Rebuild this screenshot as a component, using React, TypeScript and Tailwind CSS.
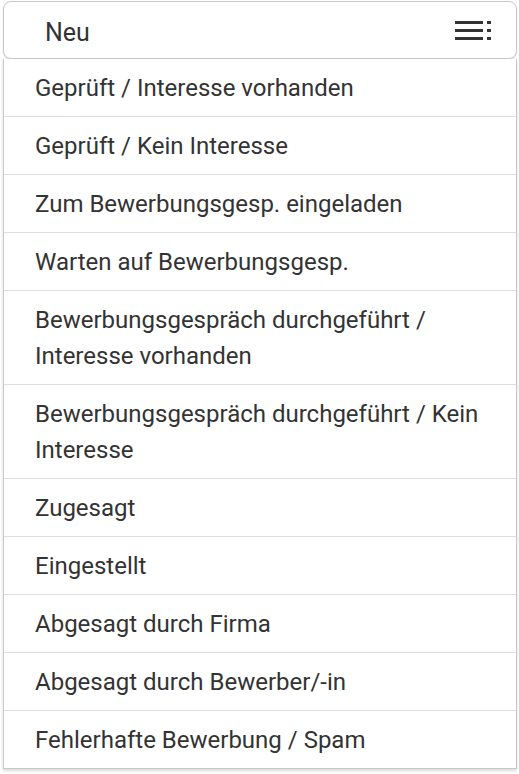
const ITEMS = [
  "Geprüft / Interesse vorhanden",
  "Geprüft / Kein Interesse",
  "Zum Bewerbungsgesp. eingeladen",
  "Warten auf Bewerbungsgesp.",
  "Bewerbungsgespräch durchgeführt / Interesse vorhanden",
  "Bewerbungsgespräch durchgeführt / Kein Interesse",
  "Zugesagt",
  "Eingestellt",
  "Abgesagt durch Firma",
  "Abgesagt durch Bewerber/-in",
  "Fehlerhafte Bewerbung / Spam",
];

function ListIcon() {
  return (
    <svg width="36" height="20" viewBox="0 0 36 20" className="text-[#333]">
      <rect x="0" y="1" width="28" height="3" fill="currentColor" />
      <rect x="0" y="9" width="28" height="3" fill="currentColor" />
      <rect x="0" y="17" width="28" height="3" fill="currentColor" />
      <rect x="32" y="1" width="4" height="3" fill="currentColor" />
      <rect x="32" y="9" width="4" height="3" fill="currentColor" />
      <rect x="32" y="17" width="4" height="3" fill="currentColor" />
    </svg>
  );
}

export default function App() {
  return (
    <div className="min-h-[774px] bg-white pl-[3px] pt-[1px] font-['Roboto',sans-serif] text-[#333]">
      <div className="w-[514px]">
        <button className="flex h-[58px] w-full items-center justify-between rounded-[8px] border border-[#c8c8c8] bg-white pl-[41px] pr-[25px] shadow-[0_1px_2px_rgba(0,0,0,0.12)]">
          <span className="mt-[6px] text-[25px] leading-[30px]">Neu</span>
          <ListIcon />
        </button>
        <ul className="border-x border-b border-[#c8c8c8] bg-white shadow-[0_2px_3px_rgba(0,0,0,0.15)]">
          {ITEMS.map((item, i) => (
            <li
              key={item}
              className={
                "px-[31px] pt-[11px] pb-[10px] text-[24px] leading-[36px]" +
                (i < ITEMS.length - 1 ? " border-b border-[#dedede]" : "")
              }
            >
              {item}
            </li>
          ))}
        </ul>
      </div>
    </div>
  );
}
